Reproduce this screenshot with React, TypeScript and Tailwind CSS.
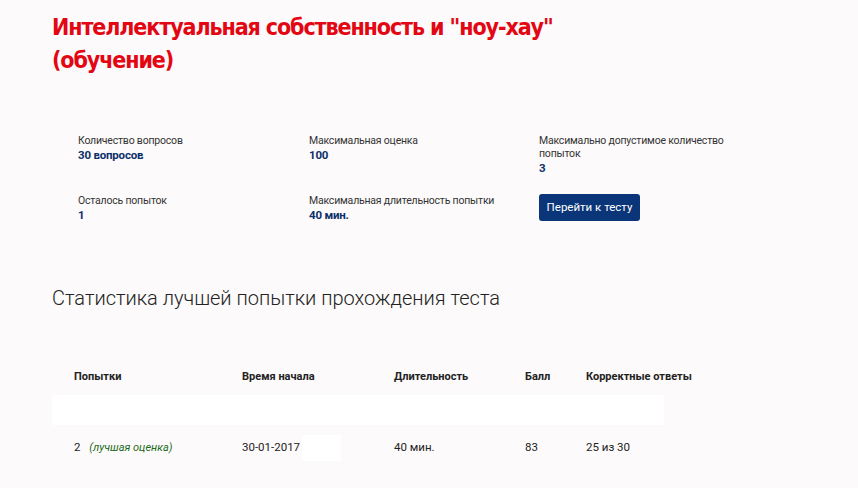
export default function App() {
  const info = [
    { label: "Количество вопросов", value: "30 вопросов" },
    { label: "Максимальная оценка", value: "100" },
    { label: "Максимально допустимое количество попыток", value: "3" },
    { label: "Осталось попыток", value: "1" },
    { label: "Максимальная длительность попытки", value: "40 мин." },
  ]

  return (
    <div className="min-h-[488px] w-[858px] bg-[#fcfafa] pl-[52px] font-['Roboto',sans-serif] text-[#222]">
      {/* title */}
      <h1 className="pt-[11px] whitespace-nowrap font-['DejaVu_Sans_Condensed',sans-serif] text-[23px] font-bold leading-[33px] tracking-[-1.1px] text-[#e30613]">
        Интеллектуальная собственность и "ноу-хау"
        <br />
        (обучение)
      </h1>

      {/* info */}
      <div className="mt-[57px] ml-[26px] grid grid-cols-[231px_230px_200px] gap-y-[20px]">
        {info.map((it) => (
          <div key={it.label} className="h-[40px]">
            <div className="w-[190px] text-[10.5px] leading-[13px] tracking-[-0.2px] text-[#333]">{it.label}</div>
            <div className="mt-[1px] text-[11.5px] font-bold leading-[14px] tracking-[-0.2px] text-[#0b2f6b]">{it.value}</div>
          </div>
        ))}
        <div>
          <button className="h-[27px] w-[101px] rounded-[3px] bg-[#0a3679] text-[11.5px] text-white">
            Перейти к тесту
          </button>
        </div>
      </div>

      {/* stats */}
      <h2 className="mt-[51px] text-[20px] font-light leading-[26px] text-[#222]">
        Статистика лучшей попытки прохождения теста
      </h2>

      <div className="mt-[48px] w-[612px] text-[11.5px]">
        <div className="grid h-[36px] grid-cols-[168px_152px_131px_61px_100px] items-center text-[11px] font-bold">
          <div className="pl-[22px]">Попытки</div>
          <div className="pl-[22px]">Время начала</div>
          <div className="pl-[22px]">Длительность</div>
          <div className="pl-[22px]">Балл</div>
          <div className="pl-[22px] whitespace-nowrap">Корректные ответы</div>
        </div>
        <div className="h-[30px] bg-white" />
        <div className="grid h-[46px] grid-cols-[168px_152px_131px_61px_100px] items-center">
          <div className="pl-[22px]">
            2 <i className="ml-[6px] text-[11px] text-[#1b6b1b]">(лучшая оценка)</i>
          </div>
          <div className="flex items-center pl-[22px]">
            30-01-2017
            <span className="ml-[2px] h-[26px] w-[39px] bg-white" />
          </div>
          <div className="pl-[22px]">40 мин.</div>
          <div className="pl-[22px]">83</div>
          <div className="pl-[22px] whitespace-nowrap">25 из 30</div>
        </div>
      </div>
    </div>
  )
}
